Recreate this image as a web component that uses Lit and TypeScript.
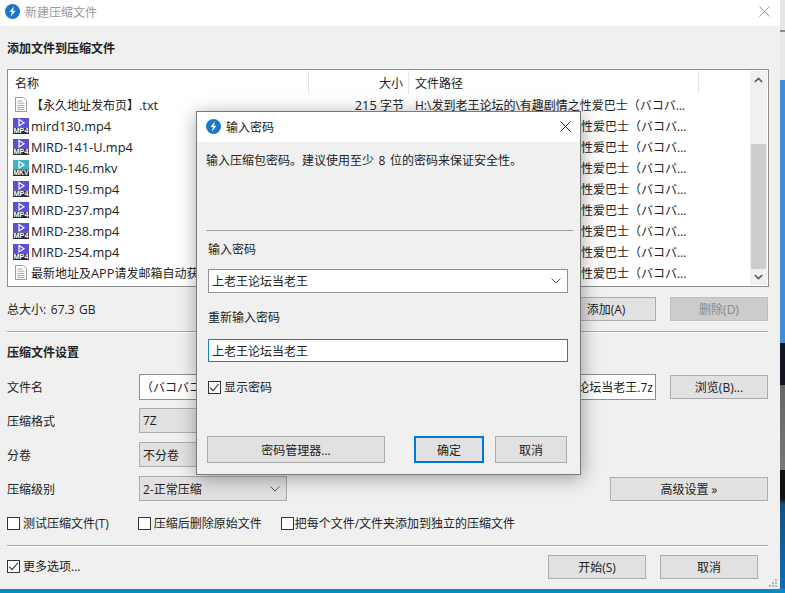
import { LitElement, html, css, svg } from "lit";
import { customElement } from "lit/decorators.js";

const logo = (size: number) => html`<svg width=${size} height=${size} viewBox="0 0 16 16" class="logo">
  <circle cx="8" cy="8" r="8" fill="#1976c8"></circle>
  <path d="M9.6 2.4 4.8 8.6h2.6L6.2 13.6 11.2 7.2H8.4z" fill="#fff"></path>
</svg>`;

const txtIcon = html`<svg width="12" height="15" viewBox="0 0 12 15" class="ficon txt">
  <path d="M.5.5h8l3 3v11h-11z" fill="#fff" stroke="#9a9a9a"></path>
  <path d="M2.5 4h5M2.5 6.2h7M2.5 8.4h7M2.5 10.6h7M2.5 12.6h7" stroke="#a8a8a8" fill="none"></path>
</svg>`;

const videoIcon = (kind: string) => {
  const top = kind === "MKV" ? "#3fb3c4" : "#5b4fd6";
  return html`<svg width="16" height="16" viewBox="0 0 16 16" class="ficon">
    <rect x="0" y="0" width="16" height="9.5" fill=${top}></rect>
    <path d="M6 1.5 11 4.7 6 8z" fill="none" stroke="#fff" stroke-width="1.2"></path>
    <rect x="0" y="9.5" width="16" height="6.5" fill="#2a2833"></rect>
    <text x="8" y="15" text-anchor="middle" font-size="6.5" font-weight="700" fill="#fff" font-family="Liberation Sans, sans-serif" textLength="15" lengthAdjust="spacingAndGlyphs">${kind}</text>
  </svg>`;
};

const chevron = html`<svg class="chev" width="10" height="6" viewBox="0 0 10 6"><path d="M.5.5 5 5 9.5.5" fill="none" stroke="#555" stroke-width="1"></path></svg>`;
const check = html`<svg width="13" height="13" viewBox="0 0 13 13" class="checkmark"><path d="M2.2 6.6 5 9.6 10.8 3" fill="none" stroke="#333" stroke-width="1.1"></path></svg>`;
const closeX = (c: string) => html`<svg class="x" width="11" height="11" viewBox="0 0 11 11"><path d="M.5.5l10 10M10.5.5l-10 10" stroke=${c} stroke-width="1" fill="none"></path></svg>`;

/* Latin runs in the reference are set slightly larger than the CJK text. */
const lat = (s: string) =>
  s.split(/([\x20-\x7e]+)/).map((p, i) => (i % 2 ? html`<span class="lat">${p}</span>` : p));

const FULL_PATH = "H:\\发到老王论坛的\\有趣剧情之性爱巴士（バコバ…";
const TAIL_PATH = "性爱巴士（バコバ…";
const rows = [
  { n: "【永久地址发布页】.txt", k: "TXT", s: "215 字节", p: FULL_PATH },
  { n: "mird130.mp4", k: "MP4", s: "", p: TAIL_PATH },
  { n: "MIRD-141-U.mp4", k: "MP4", s: "", p: TAIL_PATH },
  { n: "MIRD-146.mkv", k: "MKV", s: "", p: TAIL_PATH },
  { n: "MIRD-159.mp4", k: "MP4", s: "", p: TAIL_PATH },
  { n: "MIRD-237.mp4", k: "MP4", s: "", p: TAIL_PATH },
  { n: "MIRD-238.mp4", k: "MP4", s: "", p: TAIL_PATH },
  { n: "MIRD-254.mp4", k: "MP4", s: "", p: TAIL_PATH },
  { n: "最新地址及APP请发邮箱自动获", k: "TXT", s: "", p: TAIL_PATH },
];

@customElement("app-root")
export class AppRoot extends LitElement {
  static styles = css`
    :host {
      display: block;
      position: relative;
      width: 785px;
      height: 593px;
      overflow: hidden;
      font-family: "Open Sans", "Noto Sans CJK SC", sans-serif;
      font-size: 12px;
      color: #222;
      background: linear-gradient(#e6e6e6 0, #e6e6e6 30px, #8d8d8d 30px, #8d8d8d 32px, #e8e8e8 32px, #e8e8e8 80px, #3f8fd6 80px, #3f8fd6 343px, #10141e 343px, #10141e 385px, #666 385px, #777 470px, #111 470px, #111 498px, #14507f 505px, #0e6fb8 593px);
    }
    * { box-sizing: border-box; }
    .lat { font-size: 12.75px; }
    .window {
      width: 780px;
      height: 589px;
      background: #f0f0f0;
      display: flex;
      flex-direction: column;
    }
    .bottom { position: absolute; left: 0; right: 0; bottom: 0; height: 4px; background: #0b88c0; }
    .titlebar {
      height: 26px;
      flex: none;
      background: #fff;
      display: flex;
      align-items: center;
      padding: 0 10px 3px 5px;
      gap: 5px;
      color: #999;
    }
    .grow { flex: 1; }
    .x { display: block; flex: none; }
    .titlebar .x { margin-top: -1px; }
    .logo { flex: none; display: block; }
    .content {
      flex: 1;
      display: flex;
      flex-direction: column;
      padding: 0 12px 0 7px;
      position: relative;
    }
    .h { font-weight: 700; line-height: 16px; color: #222; }
    .h1 { margin-top: 15px; }
    .list {
      margin: 12px -1px 0 0;
      height: 218px;
      border: 1px solid #8f8f8f;
      background: #fff;
      display: flex;
    }
    .table { flex: 1; min-width: 0; display: flex; flex-direction: column; }
    .thead { height: 24px; display: grid; grid-template-columns: 301px 100px 290px 1fr; flex: none; }
    .th { display: flex; align-items: center; padding: 0 6px; border-right: 1px solid #e4e4e4; margin-top: 1px; height: 23px; }
    .th:first-child { padding-left: 7px; }
    .th.size { justify-content: flex-end; padding-right: 5px; }
    .th:last-child { border: none; }
    .row { height: 21px; display: grid; grid-template-columns: 301px 100px 290px 1fr; align-items: center; white-space: nowrap; }
    .name { display: flex; align-items: center; gap: 2px; padding-left: 5px; overflow: hidden; }
    .ficon { flex: none; display: block; }
    .ficon.txt { margin: 0 2px 0 2px; }
    .size-cell { text-align: right; padding-right: 5px; }
    .path { padding-left: 6px; overflow: hidden; }
    .path.tail { padding-left: 172px; }
    .scroll { width: 17px; flex: none; background: #f0f0f0; margin: 1px 1px 1px 0; display: flex; flex-direction: column; }
    .arrow { height: 18px; flex: none; display: flex; align-items: center; justify-content: center; }
    .arrow.down { height: 16px; }
    .track { flex: 1; display: flex; flex-direction: column; padding: 55px 1px 0; }
    .thumb { flex: 1; background: #cdcdcd; }
    .sumrow { display: flex; align-items: center; margin-top: 10px; height: 24px; }
    .sumrow .label { flex: 1; word-spacing: 1.5px; margin-top: -1px; }
    .btn {
      display: flex;
      align-items: center;
      justify-content: center;
      background: #e1e1e1;
      border: 1px solid #adadad;
      height: 24px;
      white-space: nowrap;
    }
    .w98 { width: 98px; }
    .w100 { width: 100px; }
    .w158 { width: 158px; }
    .ml14 { margin-left: 14px; }
    .disabled { background: #cccccc; border-color: #bfbfbf; color: #8a8a8a; }
    .sep { height: 2px; background: linear-gradient(#a8a8a8 1px, #fff 1px); flex: none; }
    .sep1 { margin-top: 10px; }
    .h2 { margin-top: 12px; }
    .form { display: grid; grid-template-columns: 132px 1fr; grid-auto-rows: 26px; margin-top: 13px; row-gap: 8px; align-items: center; }
    .fileline { display: flex; align-items: center; height: 26px; }
    .fileinput {
      width: 517px;
      height: 26px;
      background: #fff;
      border: 1px solid #8f8f8f;
      display: flex;
      align-items: center;
      justify-content: space-between;
      padding: 0 2px 0 1px;
      white-space: nowrap;
      overflow: hidden;
    }
    .select {
      width: 148px;
      height: 25px;
      background: #e1e1e1;
      border: 1px solid #adadad;
      display: flex;
      align-items: center;
      justify-content: space-between;
      padding: 0 3px;
      align-self: start;
    }
    .selectline { display: flex; align-items: flex-start; justify-content: space-between; height: 26px; }
    .selectline .btn { margin-top: 1px; }
    .chev { flex: none; margin-right: 3px; }
    .opts { display: flex; align-items: center; height: 16px; margin-top: 13px; }
    .cb { display: flex; align-items: center; gap: 3px; white-space: nowrap; }
    .box { width: 13px; height: 13px; border: 1px solid #333; background: #fff; display: block; flex: none; position: relative; }
    .checkmark { position: absolute; left: -1px; top: -1px; }
    .opt2 { margin-left: 29px; }
    .opt3 { margin-left: 19px; gap: 1px; }
    .sep2 { margin-top: 14px; }
    .foot { display: flex; align-items: center; margin-top: 8px; height: 24px; padding-right: 10px; }
    .foot .cb { flex: 1; margin-bottom: 2px; }
    .grip { position: absolute; right: 2px; bottom: 1px; }
    .dialog {
      position: absolute;
      left: 196px;
      top: 111px;
      width: 385px;
      height: 364px;
      background: #f0f0f0;
      border: 1px solid #7a7a7a;
      box-shadow: 1px 3px 18px rgba(0,0,0,.36);
      display: flex;
      flex-direction: column;
    }
    .dtitle { height: 30px; flex: none; background: #fff; display: flex; align-items: center; padding: 0 9px 1px; gap: 5px; }
    .dbody { flex: 1; display: flex; flex-direction: column; padding: 0 7px 0 9px; }
    .desc { margin-top: 11px; line-height: 16px; white-space: nowrap; word-spacing: 1.5px; }
    .dsep { margin-top: 61px; height: 1px; background: #a0a0a0; flex: none; }
    .dlabel { margin: 11px 0 0 2px; line-height: 16px; }
    .combo {
      margin: 11px 5px 0 2px;
      height: 24px;
      background: #fff;
      border: 1px solid #8f8f8f;
      display: flex;
      align-items: center;
      justify-content: space-between;
      padding: 0 3px;
    }
    .dlabel.second { margin-top: 17px; }
    .pwd {
      margin: 13px 5px 0 2px;
      height: 23px;
      background: #fff;
      border: 1px solid #1a82c4;
      display: flex;
      align-items: center;
      padding: 0 3px;
    }
    .cb.show { margin: 17px 0 0 2px; height: 16px; }
    .dbtns { display: flex; margin-top: 41px; padding-left: 1px; }
    .dbtns .btn { height: 27px; }
    .pm { width: 178px; }
    .ok { width: 70px; margin-left: 29px; border: 2px solid #0078d4; }
    .cancel { width: 72px; margin-left: 11px; }
  `;

  render() {
    return html`
      <div class="window">
        <div class="titlebar">
          ${logo(15)}<span>新建压缩文件</span><span class="grow"></span>${closeX("#9a9a9a")}
        </div>
        <div class="content">
          <div class="h h1">添加文件到压缩文件</div>
          <div class="list">
            <div class="table">
              <div class="thead">
                <div class="th">名称</div><div class="th size">大小</div><div class="th">文件路径</div><div class="th"></div>
              </div>
              ${rows.map((r) => html`<div class="row">
                <div class="name">${r.k === "TXT" ? txtIcon : videoIcon(r.k)}<span>${lat(r.n)}</span></div>
                <div class="size-cell">${lat(r.s)}</div>
                <div class="path ${r.p === TAIL_PATH ? "tail" : ""}">${r.p}</div>
              </div>`)}
            </div>
            <div class="scroll">
              <div class="arrow"><svg width="9" height="6" viewBox="0 0 9 6"><path d="M.8 5 4.5 1.4 8.2 5" fill="none" stroke="#555" stroke-width="1.6"></path></svg></div>
              <div class="track"><div class="thumb"></div></div>
              <div class="arrow down"><svg width="9" height="6" viewBox="0 0 9 6"><path d="M.8 1 4.5 4.6 8.2 1" fill="none" stroke="#555" stroke-width="1.6"></path></svg></div>
            </div>
          </div>
          <div class="sumrow">
            <span class="label">总大小: 67.3 GB</span>
            <div class="btn w100">添加(A)</div>
            <div class="btn w98 ml14 disabled">删除(D)</div>
          </div>
          <div class="sep sep1"></div>
          <div class="h h2">压缩文件设置</div>
          <div class="form">
            <span>文件名</span>
            <div class="fileline">
              <div class="fileinput"><span>（バコバコ</span><span>论坛当老王.7z</span></div>
              <div class="btn w98 ml14">浏览(B)...</div>
            </div>
            <span>压缩格式</span>
            <div class="select"><span>7Z</span>${chevron}</div>
            <span>分卷</span>
            <div class="select"><span>不分卷</span>${chevron}</div>
            <span>压缩级别</span>
            <div class="selectline">
              <div class="select"><span>2-正常压缩</span>${chevron}</div>
              <div class="btn w158">高级设置 »</div>
            </div>
          </div>
          <div class="opts">
            <label class="cb"><span class="box"></span>测试压缩文件(T)</label>
            <label class="cb opt2"><span class="box"></span>压缩后删除原始文件</label>
            <label class="cb opt3"><span class="box"></span>把每个文件/文件夹添加到独立的压缩文件</label>
          </div>
          <div class="sep sep2"></div>
          <div class="foot">
            <label class="cb"><span class="box">${check}</span>更多选项...</label>
            <div class="btn w98">开始(S)</div>
            <div class="btn w98 ml14">取消</div>
          </div>
          <svg class="grip" width="9" height="9" viewBox="0 0 9 9" fill="#b5b5b5">
            ${[[6,0],[3,3],[6,3],[0,6],[3,6],[6,6]].map(([x,y]) => svg`<rect x=${x} y=${y} width="2" height="2"></rect>`)}
          </svg>
        </div>
      </div>
      <div class="bottom"></div>
      <div class="dialog">
        <div class="dtitle">${logo(15)}<span>输入密码</span><span class="grow"></span>${closeX("#222")}</div>
        <div class="dbody">
          <div class="desc">输入压缩包密码。建议使用至少 8 位的密码来保证安全性。</div>
          <div class="dsep"></div>
          <div class="dlabel">输入密码</div>
          <div class="combo"><span>上老王论坛当老王</span>${chevron}</div>
          <div class="dlabel second">重新输入密码</div>
          <div class="pwd">上老王论坛当老王</div>
          <label class="cb show"><span class="box">${check}</span>显示密码</label>
          <div class="dbtns">
            <div class="btn pm">密码管理器...</div>
            <div class="btn ok">确定</div>
            <div class="btn cancel">取消</div>
          </div>
        </div>
      </div>
    `;
  }
}
